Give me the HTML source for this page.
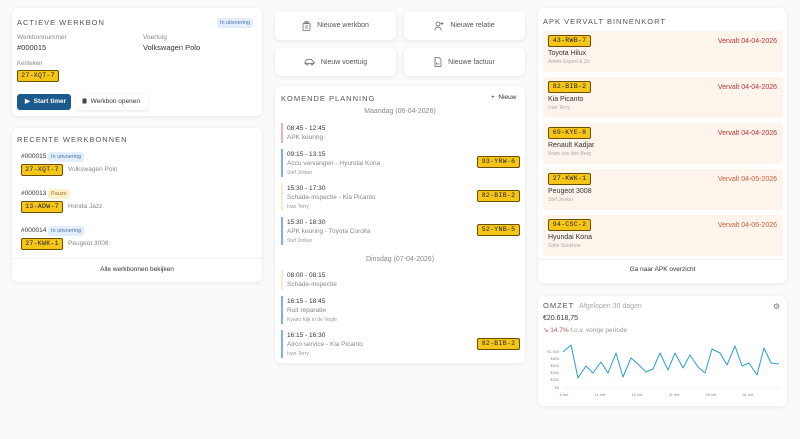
<!DOCTYPE html>
<html><head><meta charset="utf-8"><style>
*{box-sizing:border-box;margin:0;padding:0}
body{width:800px;height:439px;background:#fafafa;font-family:"Liberation Sans",sans-serif;color:#333;position:relative;overflow:hidden;font-size:7px}
.a{position:absolute}
.card{position:absolute;background:#fff;border-radius:6px;box-shadow:0 1px 4px rgba(0,0,0,.08)}
.h{position:absolute;font-size:7.5px;letter-spacing:1px;color:#555}
.plate{position:absolute;background:#f5c518;border:1px solid #6a5000;border-radius:2px;font-family:"Liberation Mono",monospace;font-size:6.5px;color:#222;height:12px;line-height:10px;text-align:center;width:42px;letter-spacing:.3px;white-space:nowrap;overflow:hidden}
.badge{position:absolute;background:#e3eefc;color:#4a6fa5;font-size:5.5px;border-radius:3px;padding:2px 3px}
.g{color:#888}
.s{font-size:5px;color:#999}
.btn{position:absolute;background:#fff;border-radius:5px;box-shadow:0 1px 4px rgba(0,0,0,.08);font-size:7px;color:#555;display:flex;align-items:center;justify-content:center;gap:6px}
.ev{position:absolute;left:283px;padding-left:4px;font-size:6.5px;line-height:9px}
.bar{position:absolute;left:281px;width:2px;background:#7ab0ec}
.apk{position:absolute;left:543px;width:240px;height:41px;background:#fdf5ec;border-radius:3px}
.apk .plate{left:5px;top:4px;width:43px}
.apk .n{position:absolute;left:5px;top:19px;font-size:7px;color:#333}
.apk .o{position:absolute;left:5px;top:28px;font-size:5px;color:#aaa}
.apk .d{position:absolute;right:6px;top:7px;font-size:7px;color:#c0303a}
</style></head><body>

<div class="card" style="left:12px;top:8px;width:250px;height:108px"></div>
<div class="h" style="left:17px;top:18px">ACTIEVE WERKBON</div>
<div class="badge" style="left:217px;top:18px">In uitvoering</div>
<div class="a g" style="left:17px;top:34px;font-size:6.5px">Werkbonnummer</div>
<div class="a" style="left:17px;top:43px;font-size:7.5px">#000015</div>
<div class="a g" style="left:143px;top:34px;font-size:6.5px">Voertuig</div>
<div class="a" style="left:143px;top:43px;font-size:7.5px">Volkswagen Polo</div>
<div class="a g" style="left:17px;top:61px;font-size:6px">Kenteken</div>
<div class="plate" style="left:17px;top:70px">27-XQT-7</div>
<div class="a" style="left:17px;top:94px;width:54px;height:16px;background:#1b5a8c;border-radius:3px;color:#fff;font-size:6.5px;font-weight:bold;line-height:16px;padding-left:8px">▶&nbsp; Start timer</div>
<div class="a" style="left:76px;top:94px;width:72px;height:16px;background:#fff;border-radius:3px;box-shadow:0 1px 3px rgba(0,0,0,.1);font-size:6.5px;line-height:16px;padding-left:6px"><svg width="5" height="6" viewBox="0 0 5 6" style="vertical-align:-0.5px"><rect x="0.5" y="0.5" width="4" height="5" fill="#444"/></svg>&nbsp; Werkbon openen</div>

<div class="card" style="left:12px;top:128px;width:250px;height:154px"></div>
<div class="h" style="left:17px;top:135px">RECENTE WERKBONNEN</div>
<div class="a" style="left:21px;top:153px;font-size:6.5px">#000015</div><div class="badge" style="left:48px;top:152px">In uitvoering</div>
<div class="plate" style="left:21px;top:164px">27-XQT-7</div><div class="a g" style="left:68px;top:166px;font-size:6.5px">Volkswagen Polo</div>
<div class="a" style="left:21px;top:190px;font-size:6.5px">#000013</div><div class="badge" style="left:48px;top:189px;background:#fdf1cc;color:#a07a20">Pauze</div>
<div class="plate" style="left:21px;top:201px">13-ADW-7</div><div class="a g" style="left:68px;top:203px;font-size:6.5px">Honda Jazz</div>
<div class="a" style="left:21px;top:227px;font-size:6.5px">#000014</div><div class="badge" style="left:48px;top:226px">In uitvoering</div>
<div class="plate" style="left:21px;top:238px">27-KWK-1</div><div class="a g" style="left:68px;top:240px;font-size:6.5px">Peugeot 3008</div>
<div class="a" style="left:12px;top:258px;width:250px;border-top:1px solid #f0f0f0"></div>
<div class="a" style="left:12px;top:266px;width:250px;text-align:center;font-size:6.5px">Alle werkbonnen bekijken</div>

<div class="btn" style="left:275px;top:11px;width:121px;height:29px"><svg width="9" height="10" viewBox="0 0 9 10" fill="none" stroke="#666" stroke-width="0.8"><rect x="1" y="2" width="7" height="7.5" rx="1"/><rect x="3" y="0.7" width="3" height="2"/><path d="M3 5h3M3 7h3"/></svg>Nieuwe werkbon</div>
<div class="btn" style="left:404px;top:11px;width:121px;height:29px"><svg width="10" height="10" viewBox="0 0 10 10" fill="none" stroke="#666" stroke-width="0.8"><circle cx="4" cy="3" r="2"/><path d="M0.8 9.5c0-2 1.5-3.5 3.2-3.5s3.2 1.5 3.2 3.5M8 1v3M6.5 2.5h3"/></svg>Nieuwe relatie</div>
<div class="btn" style="left:275px;top:48px;width:121px;height:28px"><svg width="11" height="8" viewBox="0 0 11 8" fill="none" stroke="#666" stroke-width="0.8"><path d="M1 5.5V4l1.5-2.5h5L9.5 4H10v1.5H1z"/><circle cx="3" cy="6" r="1" fill="#fff"/><circle cx="8" cy="6" r="1" fill="#fff"/></svg>Nieuw voertuig</div>
<div class="btn" style="left:404px;top:48px;width:121px;height:28px"><svg width="8" height="10" viewBox="0 0 8 10" fill="none" stroke="#666" stroke-width="0.8"><path d="M1 0.5h4l2 2v7H1z"/><path d="M2.5 7h3M2.5 5.5v2"/></svg>Nieuwe factuur</div>

<div class="card" style="left:275px;top:86px;width:250px;height:277px"></div>
<div class="h" style="left:281px;top:94px">KOMENDE PLANNING</div>
<div class="a" style="left:491px;top:94px;font-size:6.5px">+&nbsp; Nieuw</div>
<div class="a g" style="left:275px;top:108px;width:250px;text-align:center;font-size:7px">Maandag (06-04-2026)</div>
<div class="bar" style="top:123px;height:20px;background:#f0b0b8"></div>
<div class="ev" style="top:124px">08:45 - 12:45<br><span class="g">APK keuring</span></div>
<div class="bar" style="top:149px;height:28px"></div>
<div class="ev" style="top:150px">09:15 - 13:15<br><span class="g">Accu vervangen - Hyundai Kona</span><br><span class="s">Stef Jonker</span></div>
<div class="plate" style="left:477px;top:156px;width:43px">93-YRW-6</div>
<div class="bar" style="top:183px;height:28px;background:#f8ecc0"></div>
<div class="ev" style="top:184px">15:30 - 17:30<br><span class="g">Schade-inspectie - Kia Picanto</span><br><span class="s">Ivan Terry</span></div>
<div class="plate" style="left:477px;top:190px;width:43px">82-BIB-2</div>
<div class="bar" style="top:217px;height:28px"></div>
<div class="ev" style="top:218px">15:30 - 18:30<br><span class="g">APK keuring - Toyota Corolla</span><br><span class="s">Stef Jonker</span></div>
<div class="plate" style="left:477px;top:224px;width:43px">52-YNB-5</div>
<div class="a g" style="left:275px;top:256px;width:250px;text-align:center;font-size:7px">Dinsdag (07-04-2026)</div>
<div class="bar" style="top:270px;height:20px;background:#f8ecc0"></div>
<div class="ev" style="top:271px">08:00 - 08:15<br><span class="g">Schade-inspectie</span></div>
<div class="bar" style="top:296px;height:28px"></div>
<div class="ev" style="top:297px">16:15 - 18:45<br><span class="g">Ruit reparatie</span><br><span class="s">Kyano Kijk in de Vegte</span></div>
<div class="bar" style="top:330px;height:28px"></div>
<div class="ev" style="top:331px">16:15 - 16:30<br><span class="g">Airco service - Kia Picanto</span><br><span class="s">Ivan Terry</span></div>
<div class="plate" style="left:477px;top:338px;width:43px">82-BIB-2</div>

<div class="card" style="left:538px;top:8px;width:249px;height:275px"></div>
<div class="h" style="left:543px;top:17px">APK VERVALT BINNENKORT</div>
<div class="apk" style="top:31px"><div class="plate">43-RWB-7</div><div class="n">Toyota Hilux</div><div class="o">Antiek Expert &amp; Zn</div><div class="d">Vervalt 04-04-2026</div></div>
<div class="apk" style="top:77px"><div class="plate">82-BIB-2</div><div class="n">Kia Picanto</div><div class="o">Ivan Terry</div><div class="d">Vervalt 04-04-2026</div></div>
<div class="apk" style="top:123px"><div class="plate">69-KYE-8</div><div class="n">Renault Kadjar</div><div class="o">Bram van den Berg</div><div class="d">Vervalt 04-04-2026</div></div>
<div class="apk" style="top:169px"><div class="plate">27-KWK-1</div><div class="n">Peugeot 3008</div><div class="o">Stef Jonker</div><div class="d" style="color:#d05a3a">Vervalt 04-05-2026</div></div>
<div class="apk" style="top:215px"><div class="plate">94-CSC-2</div><div class="n">Hyundai Kona</div><div class="o">Sofie Soekhoe</div><div class="d" style="color:#d05a3a">Vervalt 04-06-2026</div></div>
<div class="a" style="left:538px;top:259px;width:249px;border-top:1px solid #f0f0f0"></div>
<div class="a" style="left:538px;top:266px;width:249px;text-align:center;font-size:6.5px">Ga naar APK overzicht</div>

<div class="card" style="left:538px;top:296px;width:249px;height:110px"></div>
<div class="h" style="left:543px;top:301px">OMZET <span style="letter-spacing:0;color:#aaa;font-size:7px">&nbsp;Afgelopen 30 dagen</span></div>
<div class="a" style="left:773px;top:302px;font-size:8px;color:#777">⚙</div>
<div class="a" style="left:543px;top:315px;font-size:7px">€20.618,75</div>
<div class="a" style="left:543px;top:326px;font-size:6.5px;color:#999"><span style="color:#c0505a">↘ 14.7%</span> t.o.v. vorige periode</div>
<svg class="a" style="left:538px;top:330px" width="249" height="75" viewBox="538 330 249 75">
<g font-size="3.8" fill="#888" font-family="Liberation Sans" text-anchor="end">
<text x="559" y="353">€1.000</text><text x="559" y="360">€800</text><text x="559" y="367">€600</text><text x="559" y="374">€400</text><text x="559" y="381">€200</text><text x="559" y="389">€0</text></g>
<g font-size="3.8" fill="#888" font-family="Liberation Sans" text-anchor="middle">
<text x="564" y="396">6 mrt</text><text x="600" y="396">11 mrt</text><text x="637" y="396">16 mrt</text><text x="674" y="396">21 mrt</text><text x="711" y="396">26 mrt</text><text x="748" y="396">31 mrt</text></g>
<line x1="562" y1="388" x2="782" y2="388" stroke="#e8e8e8" stroke-width="0.6"/>
<polyline fill="none" stroke="#2aa0d0" stroke-width="1" stroke-linejoin="round" points="563,352 571,345 578,378 586,366 593,373 601,362 608,373 616,353 623,377 631,358 638,364 646,372 653,369 660,353 668,370 675,353 683,368 690,355 698,367 705,373 712,349 720,353 727,365 735,346 742,366 749,363 757,375 764,348 771,363 779,364"/>
</svg>
</body></html>
